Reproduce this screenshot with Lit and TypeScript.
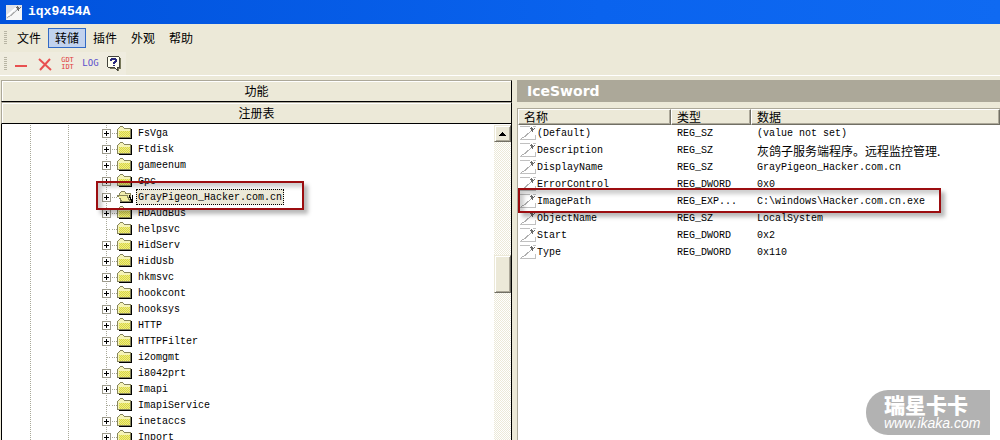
import { LitElement, html, css, svg } from "lit";
import { customElement, property } from "lit/decorators.js";
import { classMap } from "lit/directives/class-map.js";

const swordIcon = (framed: boolean) => html`<svg class=${framed ? "sword framed" : "sword"} width="16" height="15" viewBox="0 0 16 15" shape-rendering="crispEdges" aria-hidden="true">
  ${framed
    ? svg`<rect width="16" height="15" fill="#dfe1e6"/><path d="M0 15L16 2v13z" fill="#f6f6f6" shape-rendering="auto"/><path d="M1 11L10 3" stroke="#fff" stroke-width="2" shape-rendering="auto"/>`
    : svg`<path d="M0 .5h10M0 13.500h16M15.500 9v5M13 .5h3" stroke="#c0c0c0"/>`}
  <path d="M1 12h1v-1h2v-1h1V9h1V8h1V7h2V6h1V5h1V4h1v1h-1v1h-1v1H9v1H8v1H7v1H6v1H4v1H2v1H1z" fill="#b0b0b0"/>
  <path d="M11 1h1v1h1v1h1v-1h1v1h-1v1h-1v2h-1V5h-1V3h-1V2h1z" fill="#6c6c6c"/>
</svg>`;

const folderIcon = html`<svg class="folder" width="16" height="14" viewBox="0 0 16 14" shape-rendering="crispEdges" aria-hidden="true">
  <defs><pattern id="dither" width="2" height="2" patternUnits="userSpaceOnUse"><path d="M0 0h2v2H0z" fill="#dcd93c"/><path d="M0 0h1v1H0zM1 1h1v1H1z" fill="#ecea8c"/></pattern></defs>
  <path d="M2 13h13V3h-1v9H2z" fill="#000"/>
  <path d="M0 3h1V2h1V1h1V0h3v1h1v1h7v10H0z" fill="#87855c"/>
  <path d="M1 3h1V2h1V1h3v1h1v1h6v8H1z" fill="#f6f4b8"/>
  <path d="M2 5h11v6H2z" fill="url(#dither)"/>
</svg>`;

const openFolderIcon = html`<svg class="folder" width="16" height="14" viewBox="0 0 16 14" shape-rendering="crispEdges" aria-hidden="true">
  <path d="M3 12h12V5h1v8H3z" fill="#000"/>
  <path d="M2 3h1V2h1V1h4v1h1v1h5v9H3V9H2z" fill="#87855c"/>
  <path d="M3 3h1V2h4v2h5v7H3z" fill="#f2efb0"/>
  <path d="M0 5h11v2h1v2h1v2h1v1H4v-1H3V9H2V7H0z" fill="#87855c"/>
  <path d="M2 6h8v2h1v2h1v1H5v-1H4V8H2z" fill="#f4f1a0"/>
  <path d="M12 5h1v2h1v2h1v3h-1v-2h-1V8h-1z" fill="#000"/>
</svg>`;

interface Key { name: string; leaf?: boolean; open?: boolean }

const KEYS: Key[] = [
  { name: "FsVga" }, { name: "Ftdisk" }, { name: "gameenum" }, { name: "Gpc" },
  { name: "GrayPigeon_Hacker.com.cn", open: true },
  { name: "HDAudBus" }, { name: "helpsvc", leaf: true }, { name: "HidServ" },
  { name: "HidUsb" }, { name: "hkmsvc" }, { name: "hookcont" }, { name: "hooksys" },
  { name: "HTTP" }, { name: "HTTPFilter" }, { name: "i2omgmt", leaf: true },
  { name: "i8042prt" }, { name: "Imapi" }, { name: "ImapiService", leaf: true },
  { name: "inetaccs" }, { name: "Inport" },
];

const VALUES = [
  ["(Default)", "REG_SZ", "(value not set)"],
  ["Description", "REG_SZ", "灰鸽子服务端程序。远程监控管理."],
  ["DisplayName", "REG_SZ", "GrayPigeon_Hacker.com.cn"],
  ["ErrorControl", "REG_DWORD", "0x0"],
  ["ImagePath", "REG_EXP...", "C:\\windows\\Hacker.com.cn.exe"],
  ["ObjectName", "REG_SZ", "LocalSystem"],
  ["Start", "REG_DWORD", "0x2"],
  ["Type", "REG_DWORD", "0x110"],
];

@customElement("key-tree")
export class KeyTree extends LitElement {
  @property({ attribute: false }) keys: Key[] = [];

  static styles = css`
    :host { display: flex; min-width: 0; min-height: 0; padding-top: 1px; background: #fff; overflow: hidden; }
    .tree {
      flex: 1; margin: 0; padding: 0 0 0 98px; list-style: none; min-width: 0;
      background:
        repeating-linear-gradient(#a8a898 0 1px, transparent 1px 2px) 28px 0 / 1px 100% no-repeat,
        repeating-linear-gradient(#a8a898 0 1px, transparent 1px 2px) 66px 0 / 1px 100% no-repeat,
        repeating-linear-gradient(#a8a898 0 1px, transparent 1px 2px) 104px 0 / 1px 100% no-repeat;
    }
    .row { display: flex; align-items: center; height: 16px; position: relative; }
    .selected { z-index: 1; }
    .toggle {
      width: 9px; height: 9px; margin: 0 0 0 2px; padding: 0; border: 1px solid #9c9a8c; border-radius: 0; flex: none;
      background:
        linear-gradient(#000, #000) center / 5px 1px no-repeat,
        linear-gradient(#000, #000) center / 1px 5px no-repeat, #fff;
    }
    .blank { width: 4px; margin-left: 7px; height: 1px; flex: none; background: repeating-linear-gradient(90deg, #a8a898 0 1px, transparent 1px 2px); }
    .stub { width: 6px; height: 1px; flex: none; background: repeating-linear-gradient(90deg, transparent 0 1px, #a8a898 1px 2px); }
    .folder { flex: none; }
    .name { font: 10px/13px "Liberation Mono", monospace; color: #000; padding: 1px 1px 0; margin-left: 3px; border: 1px solid transparent; white-space: nowrap; }
    .selected .name { background: #ece9d8; border: 1px dotted #000; }
    .mark {
      position: absolute; left: -4px; top: -8px; width: 208px; height: 29px; box-sizing: border-box;
      border: 2px solid #9c0d10; box-shadow: 4px 4px 4px rgba(0, 0, 0, .28), inset 4px 4px 4px rgba(0, 0, 0, .2); pointer-events: none;
    }
    .scroll { width: 17px; flex: none; display: flex; flex-direction: column; background: repeating-conic-gradient(#ece9d8 0 25%, #fff 0 50%) 0 0 / 2px 2px; }
    .up, .thumb {
      box-sizing: border-box; padding: 0; border: 1px solid; border-radius: 0; border-color: #ece9d8 #716f64 #716f64 #ece9d8;
      background: #ece9d8; box-shadow: inset 1px 1px #fff, inset -1px -1px #aca899;
    }
    .up { height: 17px; display: grid; place-items: center; }
    .gap { flex: 113; }
    .thumb { height: 38px; }
    .rest { flex: 147; }
  `;

  render() {
    return html`
      <ul class="tree">
        ${this.keys.map((k) => html`<li class=${classMap({ row: true, selected: !!k.open })}>
          ${k.leaf ? html`<span class="blank"></span>` : html`<button class="toggle" aria-label="+"></button>`}
          <span class="stub"></span>
          ${k.open ? openFolderIcon : folderIcon}
          <span class="name">${k.name}</span>
          ${k.open ? html`<span class="mark"></span>` : ""}
        </li>`)}
      </ul>
      <div class="scroll">
        <button class="up" aria-label="▲"><svg width="7" height="4" viewBox="0 0 7 4" shape-rendering="crispEdges"><path d="M3 0h1v1h1v1h1v1h1v1H0V3h1V2h1V1h1z"/></svg></button>
        <span class="gap"></span><span class="thumb"></span><span class="rest"></span>
      </div>`;
  }
}

@customElement("value-list")
export class ValueList extends LitElement {
  @property({ attribute: false }) values: string[][] = [];

  static styles = css`
    :host { display: block; background: #fff; min-width: 0; }
    .table { width: 100%; border-collapse: separate; border-spacing: 0; table-layout: fixed; font: 10px/17px "Liberation Mono", "Noto Sans CJK SC", monospace; color: #000; }
    .c1 { width: 153px; }
    .c2 { width: 80px; }
    .head {
      box-sizing: border-box; height: 16px; padding: 0 5px; text-align: left; font: 12px/12px "Noto Sans CJK SC", sans-serif;
      background: #ece9d8; border: 1px solid; border-color: #fff #716f64 #716f64 #fff; box-shadow: inset -1px -1px #aca899;
    }
    .cell { height: 17px; padding: 0 0 0 6px; white-space: nowrap; }
    .first { padding: 0 0 0 2px; }
    .cjk { font: 12px/17px "Noto Sans CJK SC", sans-serif; }
    .line { display: flex; align-items: center; gap: 1px; height: 17px; }
    .marked { position: relative; }
    .mark {
      position: absolute; left: 0; top: -5px; width: 423px; height: 25px; box-sizing: border-box;
      border: 2px solid #9c0d10; box-shadow: 4px 4px 4px rgba(0, 0, 0, .28), inset 4px 4px 4px rgba(0, 0, 0, .2); pointer-events: none;
    }
  `;

  render() {
    return html`<table class="table">
      <colgroup><col class="c1"><col class="c2"><col></colgroup>
      <thead><tr><th class="head">名称</th><th class="head">类型</th><th class="head">数据</th></tr></thead>
      <tbody>${this.values.map(([n, t, d]) => html`<tr>
        <td class=${classMap({ cell: true, first: true, marked: n === "ImagePath" })}>
          <div class="line">${swordIcon(false)}<span>${n}</span></div>
          ${n === "ImagePath" ? html`<span class="mark"></span>` : ""}
        </td>
        <td class="cell">${t}</td>
        <td class=${classMap({ cell: true, cjk: n === "Description" })}>${d}</td>
      </tr>`)}</tbody>
    </table>`;
  }
}

@customElement("app-root")
export class AppRoot extends LitElement {
  static styles = css`
    :host {
      display: flex; flex-direction: column; position: relative; height: 100vh; overflow: hidden; box-sizing: border-box;
      background: #ece9d8; font: 12px/16px "Noto Sans CJK SC", sans-serif; color: #000;
    }
    .title { display: flex; align-items: center; gap: 6px; height: 24px; flex: none; padding: 0 6px; background: linear-gradient(90deg, #0052dc, #0a63ee 60%, #0f6af2); }
    .caption { margin: 0; color: #fff; font: bold 13px/16px "Liberation Mono", monospace; }
    .sword { flex: none; }
    .menu { display: flex; align-items: center; height: 28px; flex: none; padding: 0 4px; }
    .grip { width: 3px; height: 14px; margin-right: 3px; flex: none; background: repeating-linear-gradient(#b8b5a4 0 1px, transparent 1px 2px); }
    .item { box-sizing: border-box; width: 38px; height: 20px; padding: 0; border: 1px solid transparent; background: none; font: 12px/16px "Noto Sans CJK SC", sans-serif; color: #000; }
    .active { background: #c1d2ee; border-color: #316ac5; }
    .tools { display: flex; align-items: center; height: 23px; flex: none; padding: 0 4px; width: 118px; background: #efecdf; }
    .tool { width: 23px; height: 20px; padding: 0; border: 0; background: none; display: grid; place-items: center; flex: none; }
    .gdt { font: 7px/7px "DejaVu Sans Mono", monospace; color: #e04040; }
    .log { font: 9px/9px "DejaVu Sans Mono", monospace; color: #5a50cc; }
    .body { flex: 1; min-height: 0; display: flex; gap: 5px; border-top: 1px solid #fff; padding: 4px 0 0 1px; }
    .left { width: 511px; flex: none; display: flex; flex-direction: column; }
    .section {
      box-sizing: border-box; height: 22px; flex: none; padding: 0; border-radius: 0; border: 1px solid; border-color: #aca899 #000 #000 #aca899;
      background: #ece9d8; box-shadow: inset 1px 1px #fff; font: 12px/18px "Noto Sans CJK SC", sans-serif; color: #000;
    }
    .treebox { flex: 1; min-height: 0; border: solid #000; border-width: 0 1px 0 1px; }
    .right { flex: 1; min-width: 0; display: flex; flex-direction: column; }
    .heading { margin: 0 0 6px; padding-left: 10px; height: 22px; flex: none; background: #aca899; color: #fff; font: bold 14px/22px "DejaVu Sans", sans-serif; }
    .list { flex: 1; border: solid #aca899; border-width: 1px 0 0 1px; }
    .badge {
      position: absolute; right: 10px; bottom: 5px; width: 124px; height: 45px; box-sizing: border-box; padding: 4px 0 0 18px;
      border-radius: 22px 0 0 22px; background: #b2b2b2; color: #fff;
    }
    .brand { display: block; font: 900 21px/21px "Noto Sans CJK SC", sans-serif; }
    .site { display: block; font: italic 14px/16px "Liberation Sans", sans-serif; color: #fff; text-decoration: none; }
  `;

  render() {
    return html`
      <header class="title">${swordIcon(true)}<h1 class="caption">iqx9454A</h1></header>
      <nav class="menu">
        <span class="grip"></span>
        ${["文件", "转储", "插件", "外观", "帮助"].map((t, i) => html`<button class=${classMap({ item: true, active: i === 1 })}>${t}</button>`)}
      </nav>
      <div class="tools">
        <span class="grip"></span>
        <button class="tool" aria-label="−"><svg width="13" height="14" viewBox="0 0 13 14"><path d="M0 9h12" stroke="#e85050" stroke-width="2"/></svg></button>
        <button class="tool" aria-label="×"><svg width="14" height="14" viewBox="0 0 14 14"><path d="M1 2l12 11M12 2L2 13" stroke="#e85050" stroke-width="2" fill="none"/></svg></button>
        <button class="tool gdt"><span>GDT<br>IDT</span></button>
        <button class="tool log">LOG</button>
        <button class="tool" aria-label="?"><svg width="14" height="15" viewBox="0 0 14 15" shape-rendering="crispEdges"><path d="M3 1h10v1h1v11h-2v2h-1v-1h-1v-1H3z" fill="#77775a"/><path d="M1 0h11v1h1v11h-2v3h-1v-1H9v-1H8v-1H1v-1H0V1h1z" fill="#44443c"/><path d="M1 1h11v10h-2v2H9v-1H8v-1H1z" fill="#fffff0"/><path d="M4 2h5v1h1v3H9v1H8v1H6V6h1V5h1V4H5v1H3V3h1zM6 9h2v1H6z" fill="#28287c"/></svg></button>
      </div>
      <main class="body">
        <section class="left">
          <button class="section">功能</button>
          <button class="section">注册表</button>
          <key-tree class="treebox" .keys=${KEYS}></key-tree>
        </section>
        <section class="right">
          <h2 class="heading">IceSword</h2>
          <value-list class="list" .values=${VALUES}></value-list>
        </section>
      </main>
      <aside class="badge"><span class="brand">瑞星卡卡</span><a class="site" href="#">www.ikaka.com</a></aside>`;
  }
}
